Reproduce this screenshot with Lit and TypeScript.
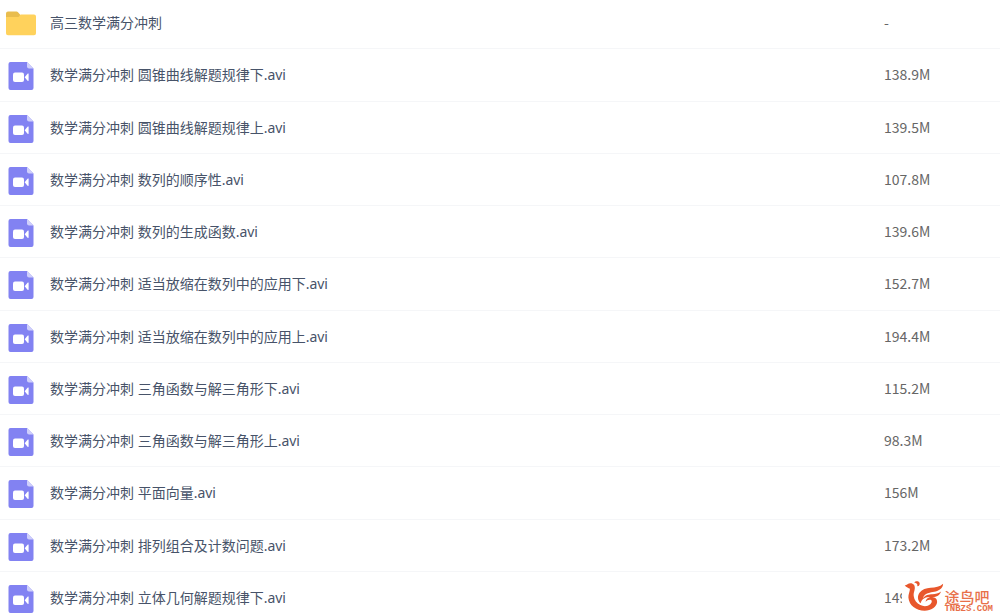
import { LitElement, html, css, svg } from "lit";
import { customElement, property } from "lit/decorators.js";

interface Entry {
  name: string;
  size: string;
  folder?: boolean;
}

const entries: Entry[] = [
  { name: "高三数学满分冲刺", size: "-", folder: true },
  { name: "数学满分冲刺 圆锥曲线解题规律下.avi", size: "138.9M" },
  { name: "数学满分冲刺 圆锥曲线解题规律上.avi", size: "139.5M" },
  { name: "数学满分冲刺 数列的顺序性.avi", size: "107.8M" },
  { name: "数学满分冲刺 数列的生成函数.avi", size: "139.6M" },
  { name: "数学满分冲刺 适当放缩在数列中的应用下.avi", size: "152.7M" },
  { name: "数学满分冲刺 适当放缩在数列中的应用上.avi", size: "194.4M" },
  { name: "数学满分冲刺 三角函数与解三角形下.avi", size: "115.2M" },
  { name: "数学满分冲刺 三角函数与解三角形上.avi", size: "98.3M" },
  { name: "数学满分冲刺 平面向量.avi", size: "156M" },
  { name: "数学满分冲刺 排列组合及计数问题.avi", size: "173.2M" },
  { name: "数学满分冲刺 立体几何解题规律下.avi", size: "149M" },
];

const folderShape = svg`
  <path fill="#e9bd4e" d="M1 6.500V3.500a2 2 0 0 1 2-2h8.500a2 2 0 0 1 1.500.7l2 2.300v4H1z"/>
  <path fill="#ffd25c" d="M1 7h12.500l2-2.500H29a2 2 0 0 1 2 2v16.800a2 2 0 0 1-2 2H3a2 2 0 0 1-2-2z"/>`;

const videoShape = svg`
  <path fill="#8282f2" d="M5.500 0h16.500l6.500 6.500V26a2 2 0 0 1-2 2H5.500a2 2 0 0 1-2-2V2a2 2 0 0 1 2-2z"/>
  <path fill="#cfcffb" d="M22 0l6.500 6.500H24a2 2 0 0 1-2-2z"/>
  <rect fill="#fff" x="8" y="10.500" width="11" height="9.500" rx="2"/>
  <path fill="#fff" d="M19.600 15.200l3.200-3.600c.3-.3.800-.2.800.3v6.700c0 .5-.5.600-.8.300z"/>`;

@customElement("file-icon")
class FileIcon extends LitElement {
  @property({ type: Boolean }) folder = false;

  static styles = css`
    :host {
      display: block;
    }
    .icon {
      display: block;
      width: 32px;
      height: 28px;
    }
  `;

  render() {
    return html`<svg class="icon" viewBox="0 0 32 28" aria-hidden="true">
      ${this.folder ? folderShape : videoShape}
    </svg>`;
  }
}

@customElement("site-mark")
class SiteMark extends LitElement {
  static styles = css`
    :host {
      display: flex;
      align-items: flex-end;
      background: #fff;
      color: #e8704a;
    }
    .bird {
      flex: none;
      width: 42px;
      height: 37px;
    }
    .words {
      display: flex;
      flex-direction: column;
      padding-bottom: 2px;
    }
    .name {
      font: 500 15px/16px "Noto Sans CJK SC", sans-serif;
    }
    .domain {
      font: bold 9px/9px "Liberation Mono", monospace;
    }
  `;

  render() {
    return html`
      <svg class="bird" viewBox="-1 0 42 37" aria-hidden="true">
        <g fill="#e8572c">
          <path d="M1.700 6.600C4 6.200 5 4.300 7.500 4.300c3 0 4.700 2.300 4.300 5.200-.3 2.600-1.500 4.700-1.100 7.600.5 4.300 3.200 7.300 6.600 9 3.400 1.700 7.400 1.500 10-.8 2-1.800 1.900-4.100.2-4.500-1.800-.4-3.600.5-4.900 2 .4-3 3.200-4.900 6.500-4.700 3.300.2 5.300 2.300 5 5.200-.5 4.700-6 8.500-12.400 8.500C13 31.800 6 26.500 5.400 18.600 5.200 15.300 7 12.500 6.900 9.700 5.300 9.300 3.700 8.500 1.700 6.600z"/>
          <path d="M17.600 24.300c-3.200-3.200-3.500-7.600-.9-10.900 2.500-3.100 6.300-4.200 10.900-4.600 4.900-.4 9-.9 12.500-4-.1 2-.8 3.500-2 4.800-3.300 3.200-7.300 3.200-11.400 4.100-4 .9-6.300 2.800-6.700 5.600 2.300-3.400 5.700-3.900 9.400-4.100 3.200-.2 6.100-.6 8.700-2.700-1.500 4-4.500 5.600-8.700 5.500-5.600-.2-10.100.3-11.800 6.300z"/>
          <path d="M11.200 3.600c1.100-1.800 4.200-2 5.200-.1.900 1.700-.1 3.700-2.100 3.800.6-1.900-.8-3.500-3.100-3.700z"/>
        </g>
      </svg>
      <div class="words">
        <span class="name">途鸟吧</span>
        <span class="domain">TNBZS.COM</span>
      </div>
    `;
  }
}

@customElement("app-root")
class AppRoot extends LitElement {
  static styles = css`
    :host {
      display: block;
      position: relative;
      height: 100vh;
      overflow: hidden;
      background: #fff;
      font: 14px/20px "Noto Sans", "Noto Sans CJK SC", sans-serif;
    }
    .files {
      width: 100%;
      margin-top: -3px;
      border-collapse: separate;
      border-spacing: 0;
      table-layout: fixed;
    }
    .row {
      height: 52px;
    }
    .row:nth-child(4n + 2) {
      height: 53px;
    }
    .cell {
      box-sizing: border-box;
      padding: 0;
      border-bottom: 1px solid #f5f6f8;
      text-align: left;
      font-weight: normal;
      white-space: nowrap;
    }
    .entry {
      display: flex;
      align-items: center;
      gap: 13px;
      padding-left: 5px;
      color: #475369;
    }
    .entry file-icon {
      padding-top: 2px;
    }
    .size {
      width: 116px;
      padding-bottom: 2px;
      color: #666;
      font-family: "Noto Sans CJK SC", sans-serif;
    }
    .mark {
      position: absolute;
      right: 7px;
      bottom: 0;
    }
  `;

  render() {
    return html`
      <table class="files" aria-label="文件列表">
        <tbody>
          ${entries.map(
            (entry) => html`<tr class="row">
              <th class="cell" scope="row">
                <div class="entry">
                  <file-icon ?folder=${entry.folder}></file-icon>
                  <span>${entry.name}</span>
                </div>
              </th>
              <td class="cell size">${entry.size}</td>
            </tr>`
          )}
        </tbody>
      </table>
      <site-mark class="mark"></site-mark>
    `;
  }
}
